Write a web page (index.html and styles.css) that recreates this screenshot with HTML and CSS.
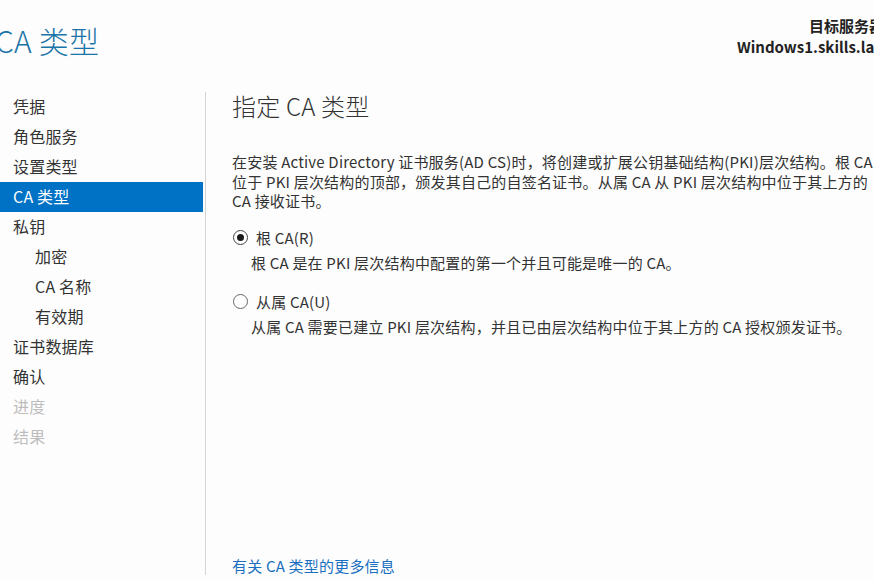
FILE: index.html
```html
<!DOCTYPE html>
<html lang="zh-CN">
<head>
  <meta charset="UTF-8">
  <title>CA 类型</title>
  <link rel="stylesheet" href="styles.css">
</head>
<body>

  <!-- Header -->
  <header class="top">
    <h1 class="title">CA 类型</h1>
    <div class="target">
      <div class="target-label">目标服务器</div>
      <div class="target-name">Windows1.skills.lab</div>
    </div>
  </header>

  <div class="main">
    <!-- Wizard steps -->
    <nav class="steps">
      <div class="step">凭据</div>
      <div class="step">角色服务</div>
      <div class="step">设置类型</div>
      <div class="step active">CA 类型</div>
      <div class="step">私钥</div>
      <div class="step sub">加密</div>
      <div class="step sub">CA 名称</div>
      <div class="step sub">有效期</div>
      <div class="step">证书数据库</div>
      <div class="step">确认</div>
      <div class="step disabled">进度</div>
      <div class="step disabled">结果</div>
    </nav>

    <!-- Page content -->
    <section class="content">
      <h2>指定 CA 类型</h2>
      <p class="intro">
        <span class="line">在安装 Active Directory 证书服务(AD CS)时，将创建或扩展公钥基础结构(PKI)层次结构。根 CA</span>
        <span class="line">位于 PKI 层次结构的顶部，颁发其自己的自签名证书。从属 CA 从 PKI 层次结构中位于其上方的</span>
        <span class="line">CA 接收证书。</span>
      </p>

      <div class="option">
        <div class="option-head"><span class="radio checked"></span><span>根 CA(R)</span></div>
        <div class="option-desc">根 CA 是在 PKI 层次结构中配置的第一个并且可能是唯一的 CA。</div>
      </div>

      <div class="option">
        <div class="option-head"><span class="radio"></span><span>从属 CA(U)</span></div>
        <div class="option-desc">从属 CA 需要已建立 PKI 层次结构，并且已由层次结构中位于其上方的 CA 授权颁发证书。</div>
      </div>

      <a class="more" href="#">有关 CA 类型的更多信息</a>
    </section>
  </div>

</body>
</html>
```

FILE: styles.css
```css
html, body {
  overflow: hidden;
}

body {
  margin: 0;
  width: 874px;
  height: 581px;
  background: #fdfdfd;
  color: #333;
  font-family: "Noto Sans CJK SC", "Noto Sans", sans-serif;
}

.top {
  display: flex;
  justify-content: space-between;
  align-items: flex-start;
  height: 92px;
}

.title {
  margin: 21px 0 0 -5px;
  font-size: 30px;
  line-height: 38px;
  font-weight: 300;
  letter-spacing: 0.2px;
  color: #1a74a8;
}

.target {
  margin-right: -10px;
  padding-top: 15px;
  text-align: right;
  font-size: 15px;
  font-weight: bold;
  line-height: 21px;
  color: #222;
  white-space: nowrap;
}

.main {
  display: flex;
  height: 483px;
}

.steps {
  width: 203px;
  margin-right: 2px;
}

.step {
  height: 30px;
  line-height: 29px;
  padding-left: 13px;
  font-size: 16px;
  letter-spacing: 0.2px;
  color: #333;
}

.step.sub {
  padding-left: 35px;
}

.step.active {
  background: #0072c6;
  color: #fff;
}

.step.disabled {
  color: #bdbdbd;
}

.content {
  flex: 1;
  display: flex;
  flex-direction: column;
  border-left: 1px solid #d4d4d4;
  padding-left: 26px;
  min-width: 0;
  letter-spacing: 0.2px;
}

.content h2 {
  margin: 0;
  font-size: 24px;
  font-weight: 300;
  line-height: 28px;
  color: #333;
}

.intro {
  margin: 32px 0 0;
  font-size: 15px;
  line-height: 19.5px;
  white-space: nowrap;
}

.line {
  display: block;
}

.option {
  font-size: 15px;
  line-height: 20px;
  white-space: nowrap;
}

.intro + .option {
  margin-top: 17px;
}

.option + .option {
  margin-top: 19px;
}

.option-head {
  display: flex;
  align-items: center;
  gap: 8px;
  padding-left: 1px;
}

.radio {
  width: 13px;
  height: 13px;
  border: 1px solid #666;
  border-radius: 50%;
  display: flex;
  align-items: center;
  justify-content: center;
  background: #fff;
}

.radio.checked {
  border-color: #444;
}

.radio.checked::after {
  content: "";
  width: 7px;
  height: 7px;
  border-radius: 50%;
  background: #1a1a1a;
}

.option-desc {
  margin-top: 5px;
  padding-left: 19px;
}

.more {
  margin-top: auto;
  font-size: 15px;
  line-height: 18px;
  color: #1a6fc0;
  text-decoration: none;
}
```
